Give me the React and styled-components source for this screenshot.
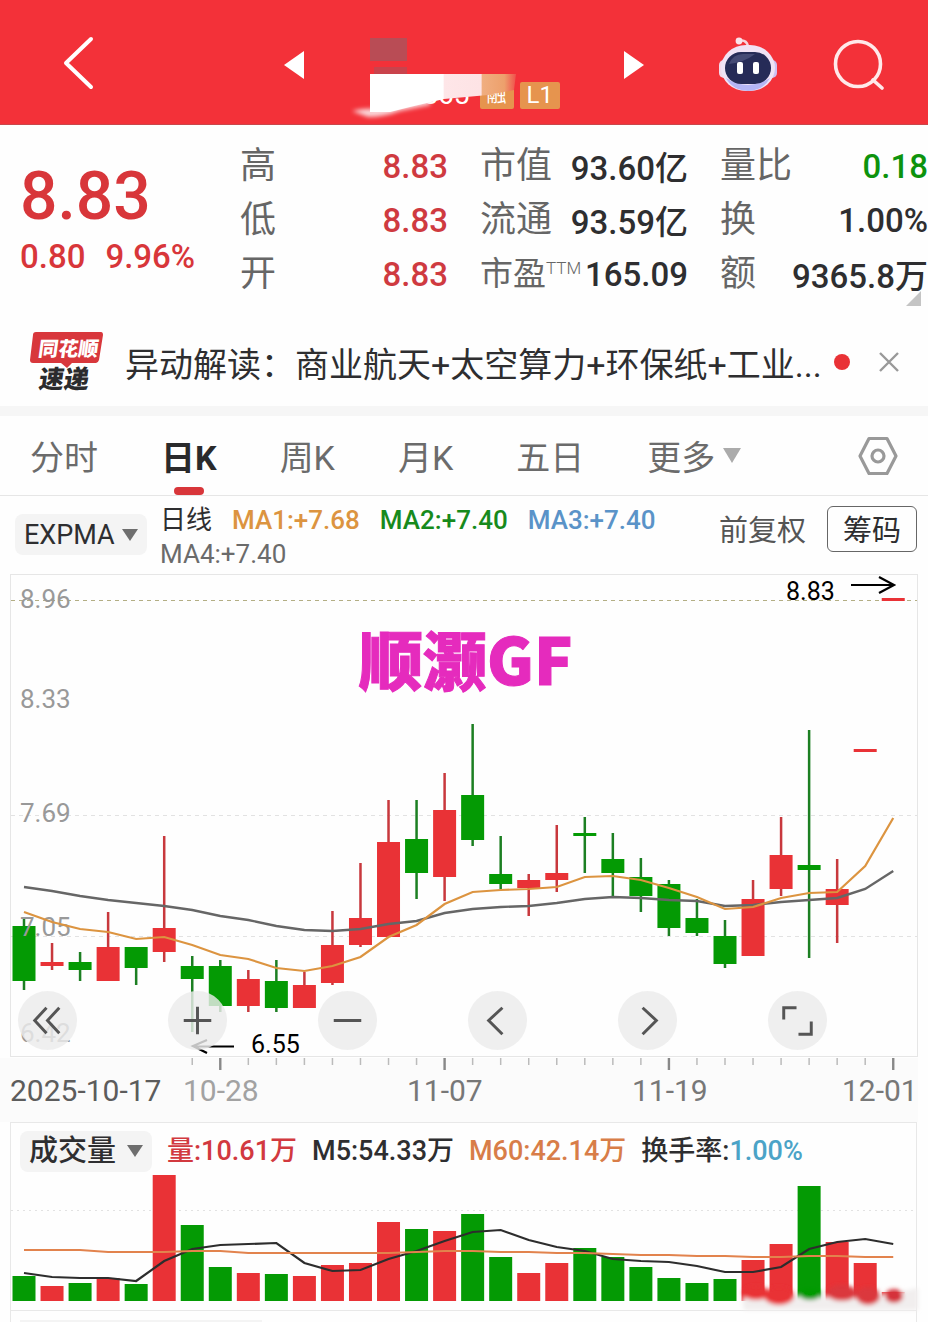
import React from "react";
import styled, { createGlobalStyle } from "styled-components";

const RED = "#e93236";
const GREEN = "#049a04";
const SANS = `Roboto, "Noto Sans CJK SC", sans-serif`;
const HEAVY = `"Noto Sans CJK SC", sans-serif`;

const GlobalStyle = createGlobalStyle`
  * {
    box-sizing: border-box;
  }

  body {
    margin: 0;
    background: #fefefe;
    color: #2e2e30;
    font-family: ${SANS};
  }

  button,
  select {
    padding: 0;
    border: 0;
    background: none;
    color: inherit;
    font-family: inherit;
  }

  svg {
    display: block;
  }
`;

const Page = styled.main`
  overflow: hidden;
`;

/* ---------- header ---------- */

const Header = styled.header`
  display: grid;
  grid-template-columns: 1fr auto 1fr;
  align-items: center;
  height: 125px;
  padding: 6px 44px 0;
  background: #f33139;
  border-bottom: 1px solid #c9474b;
  color: #fff;
`;

const BackButton = styled.button`
  margin-left: 18px;
`;

const StockNav = styled.nav`
  display: flex;
  align-items: center;
  gap: 64px;
`;

const StockTitle = styled.div`
  position: relative;
  display: flex;
  align-items: flex-end;
  justify-content: flex-end;
  gap: 6px;
  width: 192px;
  height: 88px;
`;

const StockCode = styled.span`
  margin-right: 4px;
  font-size: 28px;
  line-height: 28px;
`;

const Badge = styled.span`
  height: 27px;
  padding: 0 7px;
  border-radius: 2px;
  background: #e6944e;
  font-size: ${(props) => props.$size || 24}px;
  line-height: 27px;
`;

const Smudge = styled.svg`
  position: absolute;
  left: -18px;
  top: 14px;
`;

const HeaderTools = styled.div`
  display: flex;
  align-items: center;
  justify-content: flex-end;
  gap: 54px;
`;

/* ---------- quote ---------- */

const Quote = styled.section`
  position: relative;
  display: grid;
  grid-template-columns: repeat(4, 1fr);
  gap: 32px;
  padding: 14px 0 9px;
`;

const PriceBlock = styled.div`
  padding: 20px 0 0 20px;
  color: #d8363a;
  font-weight: 500;
`;

const Price = styled.div`
  font-size: 66px;
  line-height: 76px;
`;

const Change = styled.div`
  display: flex;
  gap: 20px;
  font-size: 33px;
  line-height: 44px;
  white-space: nowrap;
`;

const StatList = styled.dl`
  margin: 0;
`;

const Stat = styled.div`
  display: flex;
  align-items: center;
  justify-content: space-between;
  height: 54px;
  white-space: nowrap;

  dt {
    display: flex;
    color: #666;
    font-size: ${(props) => (props.$sup ? 33 : 36)}px;
    line-height: 54px;
  }

  dt sup {
    font-size: 17px;
    font-weight: 300;
    line-height: 42px;
  }

  dd {
    margin: 0;
    color: ${(props) => props.$color || "#2e2e30"};
    font-size: 33px;
    font-weight: 500;
  }
`;

const Corner = styled.svg`
  position: absolute;
  right: 7px;
  bottom: 4px;
`;

/* ---------- news line ---------- */

const Notice = styled.section`
  display: flex;
  align-items: center;
  height: 106px;
  padding: 8px 28px 0 29px;
  border-bottom: 10px solid #f6f6f6;
`;

const NoticeText = styled.a`
  flex: 1;
  margin-left: 20px;
  color: inherit;
  font-size: 34px;
  text-decoration: none;
  white-space: nowrap;
`;

const Dot = styled.i`
  width: 16px;
  height: 16px;
  margin-right: 28px;
  border-radius: 50%;
  background: ${RED};
`;

/* ---------- tabs ---------- */

const Tabs = styled.nav`
  display: flex;
  align-items: center;
  gap: 63px;
  height: 80px;
  padding: 0 30px;
  border-bottom: 1px solid #e6e6e6;
`;

const Tab = styled.button`
  position: relative;
  display: flex;
  align-items: center;
  gap: 8px;
  height: 79px;
  color: ${(props) => (props.$active ? "#2a2a2c" : "#6b6b6b")};
  font-size: 34px;
  font-weight: ${(props) => (props.$active ? 700 : 400)};
  white-space: nowrap;

  &::after {
    content: "";
    position: absolute;
    bottom: 0;
    left: 50%;
    width: 30px;
    height: 8px;
    margin-left: -15px;
    border-radius: 4px;
    background: ${(props) => (props.$active ? "#d8363a" : "none")};
  }
`;

const SettingsButton = styled.button`
  margin-left: auto;
`;

/* ---------- indicators ---------- */

const IndicatorBar = styled.section`
  display: flex;
  align-items: center;
  height: 77px;
  padding: 0 11px 0 15px;
`;

const PickerBox = styled.label`
  display: grid;
  grid-template-columns: 1fr 16px;
  align-items: center;
  width: ${(props) => props.$width}px;
  height: 41px;
  padding: 0 9px;
  border-radius: 8px;
  background: #f4f4f4;

  select {
    grid-area: 1 / 1 / 2 / 3;
    appearance: none;
    outline: none;
    color: #2e2e30;
    font-size: ${(props) => props.$size}px;
    font-weight: ${(props) => props.$weight || 400};
    line-height: 40px;
  }

  svg {
    grid-area: 1 / 2;
    pointer-events: none;
  }
`;

const MaList = styled.div`
  display: flex;
  flex: 1;
  flex-wrap: wrap;
  column-gap: 20px;
  max-width: 510px;
  margin: 4px auto 0 13px;
`;

const MaItem = styled.span`
  color: ${(props) => props.$color || "#2e2e30"};
  font-size: 26px;
  font-weight: ${(props) => props.$weight || 400};
  line-height: 34px;
  white-space: nowrap;
`;

const PlainButton = styled.button`
  margin-right: 21px;
  color: #555;
  font-size: 29px;
  white-space: nowrap;
`;

const OutlineButton = styled.button`
  width: 90px;
  height: 46px;
  margin-bottom: 12px;
  padding-top: 4px;
  border: 1px solid #666;
  border-radius: 6px;
  font-size: 29px;
  line-height: 40px;
  white-space: nowrap;
`;

const IndicatorTools = styled.div`
  display: flex;
  align-items: baseline;
`;

/* ---------- charts ---------- */

const ChartArea = styled.section`
  position: relative;
`;

const ChartSvg = styled.svg`
  width: 100%;
  height: auto;
  overflow: visible;
  font-family: ${SANS};
`;

const ChartControls = styled.div`
  position: absolute;
  left: 18px;
  right: 101px;
  bottom: 72px;
  display: flex;
  justify-content: space-between;
`;

const RoundButton = styled.button`
  display: flex;
  align-items: center;
  justify-content: center;
  width: 59px;
  height: 59px;
  border-radius: 50%;
  background: rgba(236, 236, 236, 0.82);
`;

const VolumePanel = styled.section`
  margin: 0 11px 0 10px;
  border: 1px solid #e8e8e8;
  border-bottom: 0;
`;

const VolumeHead = styled.div`
  display: flex;
  align-items: center;
  gap: 15px;
  height: 48px;
  padding: 8px 9px 0;
`;

const VolumeItem = styled.span`
  color: ${(props) => props.$color || "#2e2e30"};
  font-size: 27px;
  font-weight: 500;
  line-height: 40px;
  white-space: nowrap;

  em {
    color: #4ba3c7;
    font-style: normal;
  }
`;

const NextPanel = styled.section`
  height: 12px;
  margin: 0 11px 0 10px;
  padding: 9px 0 0 9px;
  border: 1px solid #e8e8e8;
  border-bottom: 0;

  div {
    width: 242px;
    height: 2px;
    background: #f4f4f4;
  }
`;

// [up, high, bodyTop, bodyBottom, low, volumeTop]
const DAYS = [
  [0, 919, 926, 981, 990, 1276],
  [1, 943, 962, 966, 970, 1286],
  [0, 952, 962, 970, 981, 1283],
  [1, 912, 947, 981, 981, 1278],
  [0, 947, 947, 968, 985, 1284],
  [1, 836, 928, 952, 962, 1175],
  [0, 956, 966, 979, 1032, 1225],
  [0, 960, 966, 1006, 1012, 1267],
  [1, 970, 979, 1006, 1012, 1273],
  [0, 960, 981, 1008, 1012, 1274],
  [1, 972, 985, 1008, 1008, 1276],
  [1, 911, 945, 983, 985, 1265],
  [1, 863, 918, 945, 947, 1263],
  [1, 800, 842, 937, 937, 1222],
  [0, 800, 839, 873, 899, 1229],
  [1, 773, 810, 877, 901, 1231],
  [0, 724, 795, 840, 846, 1214],
  [0, 836, 874, 884, 889, 1257],
  [1, 874, 880, 888, 916, 1273],
  [1, 825, 873, 880, 892, 1263],
  [0, 817, 833, 836, 873, 1248],
  [0, 833, 859, 873, 897, 1257],
  [0, 858, 877, 896, 912, 1267],
  [0, 880, 884, 928, 936, 1278],
  [0, 899, 918, 933, 936, 1283],
  [0, 920, 936, 964, 968, 1279],
  [1, 880, 899, 956, 956, 1260],
  [1, 817, 855, 889, 896, 1244],
  [0, 730, 865, 870, 958, 1186],
  [1, 859, 889, 905, 943, 1242],
  [1, 749, 749, 752, 752, 1263],
  [1, 598, 598, 601, 601, 1292],
];

const MA_FAST = [
  912, 922, 929, 932, 939, 937, 945, 955, 959, 968, 971, 966, 957, 937, 925, 904,
  892, 890, 889, 887, 877, 876, 880, 888, 897, 909, 907, 898, 893, 892, 866, 818,
];
const MA_SLOW = [
  887, 891, 896, 900, 903, 906, 910, 916, 920, 926, 930, 931, 929, 924, 921, 913,
  909, 907, 906, 903, 899, 897, 898, 900, 901, 906, 905, 902, 900, 898, 889, 871,
];
const VOL_M5 = [
  1273, 1277, 1278, 1278, 1281, 1261, 1249, 1245, 1244, 1243, 1263, 1271, 1270,
  1259, 1251, 1241, 1232, 1230, 1240, 1247, 1251, 1259, 1261, 1262, 1266, 1272,
  1272, 1267, 1249, 1242, 1239, 1244,
];
const VOL_M60 = [
  1250, 1250, 1250, 1252, 1252, 1252, 1251, 1251, 1253, 1253, 1253, 1253, 1253,
  1253, 1252, 1251, 1251, 1252, 1252, 1253, 1253, 1254, 1255, 1255, 1256, 1256,
  1257, 1257, 1256, 1256, 1257, 1257,
];

const dayX = (i) => 24 + i * 28.04;
const toPoints = (values) => values.map((y, i) => `${dayX(i)},${y}`).join(" ");

const STATS = [
  [
    { label: "高", value: "8.83", color: "#cf3a40" },
    { label: "低", value: "8.83", color: "#cf3a40" },
    { label: "开", value: "8.83", color: "#cf3a40" },
  ],
  [
    { label: "市值", value: "93.60亿" },
    { label: "流通", value: "93.59亿" },
    { label: "市盈", sup: "TTM", value: "165.09" },
  ],
  [
    { label: "量比", value: "0.18", color: "#0d930d" },
    { label: "换", value: "1.00%" },
    { label: "额", value: "9365.8万" },
  ],
];

const CONTROLS = [
  { label: "最早", path: "M29 17 17 30l12 13M42 17 30 30l12 13" },
  { label: "放大", path: "M30 16v28M16 30h28" },
  { label: "缩小", path: "M16 30h28" },
  { label: "向左", path: "M35 17 21 30l14 14" },
  { label: "向右", path: "M25 17l14 13-14 14" },
  { label: "全屏", path: "M16 29V17h13M44 31v13H31" },
];

const Triangle = ({ color = "#6e6e6e", width = 16, height = 12 }) => (
  <svg width={width} height={height} viewBox="0 0 16 12" preserveAspectRatio="none">
    <path d="M0 0h16L8 12z" fill={color} />
  </svg>
);

const Picker = ({ label, value, ...rest }) => (
  <PickerBox {...rest}>
    <select aria-label={label} defaultValue={value}>
      <option>{value}</option>
    </select>
    <Triangle />
  </PickerBox>
);

const RobotIcon = () => (
  <svg width="60" height="56" viewBox="0 0 60 56">
    <path d="M21 4q7-2 9 5" fill="none" stroke="#f8d3dc" strokeWidth="2.5" />
    <circle cx="21" cy="4" r="3.4" fill="#fbe3ea" />
    <rect x="1" y="23" width="10" height="18" rx="5" fill="#f3d9ea" />
    <rect x="49" y="23" width="10" height="18" rx="5" fill="#cfc0f2" />
    <rect x="3" y="8" width="54" height="46" rx="25" fill="#f0e3f5" />
    <path d="M8 41q22 14 44 0-6 12-22 13-16-1-22-13z" fill="#b5b5f5" />
    <rect x="7" y="15" width="46" height="32" rx="16" fill="#262b57" />
    <path d="M11 27q4-10 14-10h12q-10 8-26 10z" fill="#454a75" />
    <rect x="19" y="25" width="6" height="12" rx="2" fill="#fff" />
    <rect x="35" y="25" width="6" height="12" rx="2" fill="#fff" />
  </svg>
);

const NewsLogo = () => (
  <svg width="76" height="68" viewBox="0 -3 76 68" role="img" aria-label="同花顺速递">
    <path d="M7 1h65q2 0 2 3l-4 25q-1 3-3 3H43l-5 5-6-5H4q-3 0-3-3L4 4q0-3 3-3z" fill="#d8373c" />
    <g transform="skewX(-8)" fontWeight="900" fontFamily={HEAVY}>
      <text x="12" y="25" fontSize="20" fill="#fff">同花顺</text>
      <text x="17" y="57" fontSize="25" fill="#2b2b2d">速递</text>
    </g>
  </svg>
);

const TopBar = () => (
  <Header>
    <div>
      <BackButton aria-label="返回">
        <svg width="32" height="54" viewBox="0 0 32 54" fill="none" stroke="#fff" strokeWidth="4">
          <path d="M29 3 4 27l25 24" strokeLinecap="round" strokeLinejoin="round" />
        </svg>
      </BackButton>
    </div>
    <StockNav>
      <button aria-label="上一只">
        <svg width="20" height="28" viewBox="0 0 20 28">
          <path d="M20 0v28L0 14z" fill="#fff" />
        </svg>
      </button>
      <StockTitle>
        <StockCode>565</StockCode>
        <Badge $size={20}>融</Badge>
        <Badge>L1</Badge>
        <Smudge width="180" height="90" viewBox="0 0 180 90">
          <defs>
            <filter id="soft" x="-20%" y="-40%" width="140%" height="180%">
              <feGaussianBlur stdDeviation="2" />
            </filter>
            <linearGradient id="fade">
              <stop offset="0.5" stopColor="#fff" />
              <stop offset="0.51" stopColor="#fee6e8" />
              <stop offset="0.76" stopColor="#fde3e5" />
              <stop offset="0.77" stopColor="#f0ae80" />
              <stop offset="0.92" stopColor="#eda06c" />
              <stop offset="1" stopColor="#f0504c" />
            </linearGradient>
          </defs>
          <rect x="20" y="3" width="37" height="23" fill="#b94c55" />
          <rect x="24" y="32" width="33" height="8" fill="#c9434c" />
          <path d="M2 76q14-3 18-2l60-12v8l-30 6q-16 6-32 6z" fill="#fbd5d8" filter="url(#soft)" />
          <path d="M20 39h146l-2 16-26 5-44 4-34 8-20 5H20z" fill="url(#fade)" />
        </Smudge>
      </StockTitle>
      <button aria-label="下一只">
        <svg width="20" height="28" viewBox="0 0 20 28">
          <path d="M0 0v28l20-14z" fill="#fff" />
        </svg>
      </button>
    </StockNav>
    <HeaderTools>
      <button aria-label="智能助手">
        <RobotIcon />
      </button>
      <button aria-label="搜索">
        <svg width="52" height="52" viewBox="0 0 52 52" fill="none" stroke="#ffe9ea" strokeWidth="3.6">
          <circle cx="26" cy="25" r="22.5" />
          <path d="M41 41l9 8" strokeLinecap="round" />
        </svg>
      </button>
    </HeaderTools>
  </Header>
);

const QuoteSummary = () => (
  <Quote>
    <PriceBlock>
      <Price>8.83</Price>
      <Change>
        <span>0.80</span>
        <span>9.96%</span>
      </Change>
    </PriceBlock>
    {STATS.map((column, i) => (
      <StatList key={i}>
        {column.map((stat) => (
          <Stat key={stat.label} $color={stat.color} $sup={stat.sup}>
            <dt>
              {stat.label}
              {stat.sup && <sup>{stat.sup}</sup>}
            </dt>
            <dd>{stat.value}</dd>
          </Stat>
        ))}
      </StatList>
    ))}
    <Corner width="15" height="15" viewBox="0 0 15 15">
      <path d="M15 0v15H0z" fill="#c4c4c4" />
    </Corner>
  </Quote>
);

const CandleChart = () => (
  <ChartArea>
    <ChartSvg viewBox="0 573 928 549">
      <rect x="0" y="1058" width="918" height="64" fill="#fbfbfb" />
      <rect x="10.5" y="574.5" width="907" height="482" fill="#fefefe" stroke="#e6e6e6" />
      <path d="M11 600.5h906" stroke="#b3ae84" strokeDasharray="4 4" />
      <path d="M11 815.5h906M11 936.5h906" stroke="#e2e2e2" strokeDasharray="4 4" />

      {DAYS.map(([up, high, top, bottom, low], i) => (
        <g key={i} fill={up ? RED : GREEN}>
          <rect x={dayX(i) - 1.25} y={high} width="2.5" height={low - high} fill={up ? "#c8383d" : "#1c7f22"} />
          <rect x={dayX(i) - 11.5} y={top} width="23" height={bottom - top} />
        </g>
      ))}

      <g fill="#999" fontSize="26">
        <text x="20" y="608">8.96</text>
        <text x="20" y="708">8.33</text>
        <text x="20" y="822">7.69</text>
        <text x="20" y="936">7.05</text>
        <text x="20" y="1042">6.42</text>
      </g>

      <polyline points={toPoints(MA_SLOW)} fill="none" stroke="#666" strokeWidth="2.4" />
      <polyline points={toPoints(MA_FAST)} fill="none" stroke="#dc9440" strokeWidth="2.2" />

      <g fill="none" stroke="#000" strokeWidth="2.2">
        <path d="M851 585h42M879 577l15 8-15 8" />
        <path d="M234 1046.500h-41M207 1040l-14 6 14 7" />
      </g>
      <g fill="#000" fontSize="25">
        <text x="786" y="600">8.83</text>
        <text x="251" y="1053">6.55</text>
      </g>
      <text
        x="359"
        y="685"
        fontFamily={HEAVY}
        fontSize="64"
        fontWeight="900"
        fill="#e52bbd"
        stroke="#e52bbd"
        strokeWidth="1"
      >
        顺灏GF
      </text>

      {DAYS.map((day, i) => {
        if (i < 6) return null;
        const major = i % 8 === 7;
        return (
          <path
            key={i}
            d={`M${dayX(i)} 1058v${major ? 12 : 7}`}
            stroke={major ? "#888" : "#bbb"}
            strokeWidth={major ? 2.4 : 1.5}
          />
        );
      })}
      <g fill="#777" fontSize="30">
        <text x="10" y="1101" fill="#5c5c5c">2025-10-17</text>
        <text x="183" y="1101" fill="#a2a2a2">10-28</text>
        <text x="407" y="1101">11-07</text>
        <text x="632" y="1101">11-19</text>
        <text x="842" y="1101">12-01</text>
      </g>
    </ChartSvg>
    <ChartControls>
      {CONTROLS.map((control) => (
        <RoundButton key={control.label} aria-label={control.label}>
          <svg width="59" height="59" viewBox="0 0 60 60" fill="none" stroke="#555" strokeWidth="3">
            <path d={control.path} />
          </svg>
        </RoundButton>
      ))}
    </ChartControls>
  </ChartArea>
);

const VolumeChart = () => (
  <VolumePanel>
    <VolumeHead>
      <Picker label="副图指标" value="成交量" $width={132} $size={29} $weight={500} />
      <VolumeItem $color="#d2393f">量:10.61万</VolumeItem>
      <VolumeItem>M5:54.33万</VolumeItem>
      <VolumeItem $color="#d87d48">M60:42.14万</VolumeItem>
      <VolumeItem>
        换手率:<em>1.00%</em>
      </VolumeItem>
    </VolumeHead>
    <ChartSvg viewBox="11 1171 905 139">
      <defs>
        <filter id="smear" x="-10%" y="-50%" width="120%" height="200%">
          <feGaussianBlur stdDeviation="2" />
        </filter>
      </defs>
      <path d="M11 1210.500h905" stroke="#e2e2e2" strokeDasharray="2 4" />
      {DAYS.map((day, i) => (
        <rect
          key={i}
          x={dayX(i) - 11.5}
          y={day[5]}
          width="23"
          height={(i > 30 ? 1298 : 1301) - day[5]}
          fill={day[0] ? RED : GREEN}
        />
      ))}
      <polyline points={toPoints(VOL_M5)} fill="none" stroke="#2d2d2d" strokeWidth="2.2" />
      <polyline points={toPoints(VOL_M60)} fill="none" stroke="#e2834d" strokeWidth="2.2" />
      <g filter="url(#smear)">
        <path d="M742 1298l20-2h54l22 2h20l50-8 10-2v22H744z" fill="#f1eeee" />
        <ellipse cx="756" cy="1293" rx="13" ry="7" fill={RED} />
        <ellipse cx="779" cy="1296" rx="15" ry="9" fill={RED} />
        <ellipse cx="810" cy="1294" rx="11" ry="6" fill={GREEN} />
        <ellipse cx="842" cy="1293" rx="15" ry="8" fill="#db383d" />
        <ellipse cx="868" cy="1296" rx="12" ry="9" fill="#db383d" />
        <ellipse cx="894" cy="1296" rx="9" ry="7" fill="#d5333a" />
      </g>
    </ChartSvg>
  </VolumePanel>
);

const App = () => (
  <Page lang="zh-CN">
    <GlobalStyle />
    <TopBar />
    <QuoteSummary />
    <Notice>
      <NewsLogo />
      <NoticeText href="#news">异动解读：商业航天+太空算力+环保纸+工业...</NoticeText>
      <Dot />
      <button aria-label="关闭">
        <svg width="22" height="22" viewBox="0 0 22 22" stroke="#999" strokeWidth="2.4">
          <path d="M2 2l18 18M20 2 2 20" />
        </svg>
      </button>
    </Notice>
    <Tabs>
      <Tab>分时</Tab>
      <Tab $active>日K</Tab>
      <Tab>周K</Tab>
      <Tab>月K</Tab>
      <Tab>五日</Tab>
      <Tab>
        更多
        <Triangle color="#ababab" width={18} height={15} />
      </Tab>
      <SettingsButton aria-label="设置">
        <svg width="40" height="40" viewBox="0 0 40 40" fill="none" stroke="#999" strokeWidth="3.2">
          <path d="M11 2.500h18L38 20l-9 17.500H11L2 20z" strokeLinejoin="round" />
          <circle cx="20" cy="20" r="6" />
        </svg>
      </SettingsButton>
    </Tabs>
    <IndicatorBar>
      <Picker label="主图指标" value="EXPMA" $width={132} $size={27} />
      <MaList>
        <MaItem>日线</MaItem>
        <MaItem $color="#dc9440" $weight={500}>MA1:+7.68</MaItem>
        <MaItem $color="#178a1c" $weight={500}>MA2:+7.40</MaItem>
        <MaItem $color="#5a93c8" $weight={500}>MA3:+7.40</MaItem>
        <MaItem $color="#6b6b6b">MA4:+7.40</MaItem>
      </MaList>
      <IndicatorTools>
        <PlainButton>前复权</PlainButton>
        <OutlineButton>筹码</OutlineButton>
      </IndicatorTools>
    </IndicatorBar>
    <CandleChart />
    <VolumeChart />
    <NextPanel>
      <div />
    </NextPanel>
  </Page>
);

export default App;
